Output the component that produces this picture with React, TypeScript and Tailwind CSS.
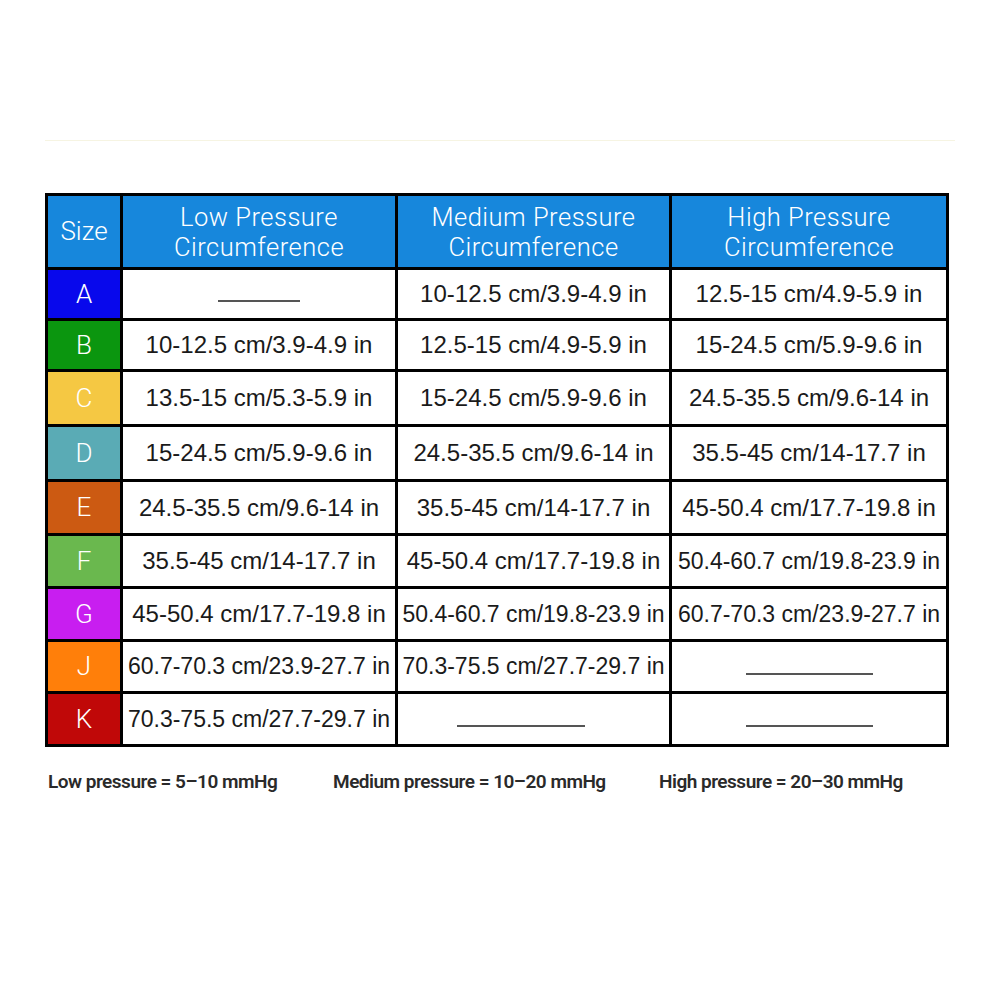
const rows = [
  { size: "A", color: "bg-[#0808ec]", h: "h-[48px]", low: null, med: "10-12.5 cm/3.9-4.9 in", high: "12.5-15 cm/4.9-5.9 in" },
  { size: "B", color: "bg-[#0b960f]", h: "h-[48px]", low: "10-12.5 cm/3.9-4.9 in", med: "12.5-15 cm/4.9-5.9 in", high: "15-24.5 cm/5.9-9.6 in" },
  { size: "C", color: "bg-[#f5c843]", h: "h-[52px]", low: "13.5-15 cm/5.3-5.9 in", med: "15-24.5 cm/5.9-9.6 in", high: "24.5-35.5 cm/9.6-14 in" },
  { size: "D", color: "bg-[#5aabb5]", h: "h-[52px]", low: "15-24.5 cm/5.9-9.6 in", med: "24.5-35.5 cm/9.6-14 in", high: "35.5-45 cm/14-17.7 in" },
  { size: "E", color: "bg-[#cc5a12]", h: "h-[51px]", low: "24.5-35.5 cm/9.6-14 in", med: "35.5-45 cm/14-17.7 in", high: "45-50.4 cm/17.7-19.8 in" },
  { size: "F", color: "bg-[#6ab84e]", h: "h-[50px]", low: "35.5-45 cm/14-17.7 in", med: "45-50.4 cm/17.7-19.8 in", high: "50.4-60.7 cm/19.8-23.9 in" },
  { size: "G", color: "bg-[#c81ef0]", h: "h-[50px]", low: "45-50.4 cm/17.7-19.8 in", med: "50.4-60.7 cm/19.8-23.9 in", high: "60.7-70.3 cm/23.9-27.7 in" },
  { size: "J", color: "bg-[#ff7f0a]", h: "h-[49px]", low: "60.7-70.3 cm/23.9-27.7 in", med: "70.3-75.5 cm/27.7-29.7 in", high: null },
  { size: "K", color: "bg-[#c00808]", h: "h-[50px]", low: "70.3-75.5 cm/27.7-29.7 in", med: null, high: null },
];

const Cell = ({ value, dashW }: { value: string | null; dashW: string }) => {
  if (!value) {
    return (
      <div className="bg-white flex items-center justify-center">
        <span className={`${dashW} h-[2px] bg-[#555] mt-[14px]`} />
      </div>
    );
  }
  return (
    <div className="bg-white flex items-center min-w-0">
      <span className="basis-[24px] grow-0 shrink" />
      <span
        className={`shrink-0 whitespace-nowrap text-[#1a1a1a] ${
          value.length >= 25 ? "text-[23px]" : "text-[24px]"
        }`}
      >
        {value}
      </span>
      <span className="basis-[24px] grow shrink" />
    </div>
  );
};

const App = () => {
  return (
    <div className="w-[1000px] h-[1000px] bg-white font-['Liberation_Sans',Arial,sans-serif]">
      <div className="h-[140px]" />
      <div className="ml-[45px] w-[910px] h-px bg-[#f6f4e2]" />
      <div className="h-[52px]" />

      {/* table */}
      <div className="ml-[45px] w-[904px] bg-black p-[3px] grid grid-cols-[72px_272px_271px_274px] gap-[3px]">
        <div className="h-[71px] bg-[#1787dc] flex items-center justify-center text-white text-[26px] font-['Roboto',sans-serif] font-light">
          Size
        </div>
        {["Low Pressure", "Medium Pressure", "High Pressure"].map((t) => (
          <div
            key={t}
            className="h-[71px] bg-[#1787dc] flex flex-col items-center justify-center text-white text-[25.5px] leading-[30px] tracking-[0.5px] font-['Roboto',sans-serif] font-light"
          >
            <span>{t}</span>
            <span>Circumference</span>
          </div>
        ))}

        {rows.map((r) => (
          <div key={r.size} className="contents">
            <div className={`${r.h} ${r.color} flex items-center justify-center text-white text-[26px] font-['Roboto',sans-serif] font-light`}>
              {r.size}
            </div>
            <Cell value={r.low} dashW="w-[82px]" />
            <Cell value={r.med} dashW="w-[128px] mr-[26px]" />
            <Cell value={r.high} dashW="w-[127px]" />
          </div>
        ))}
      </div>

      {/* legend */}
      <div className="mt-[21px] pl-[48px] flex text-[19px] font-semibold text-[#2a2a2a] font-['Roboto',sans-serif] tracking-[-0.5px]">
        <span className="w-[285px]">Low pressure = 5–10 mmHg</span>
        <span className="w-[326px]">Medium pressure = 10–20 mmHg</span>
        <span>High pressure = 20–30 mmHg</span>
      </div>
    </div>
  );
};

export default App;
